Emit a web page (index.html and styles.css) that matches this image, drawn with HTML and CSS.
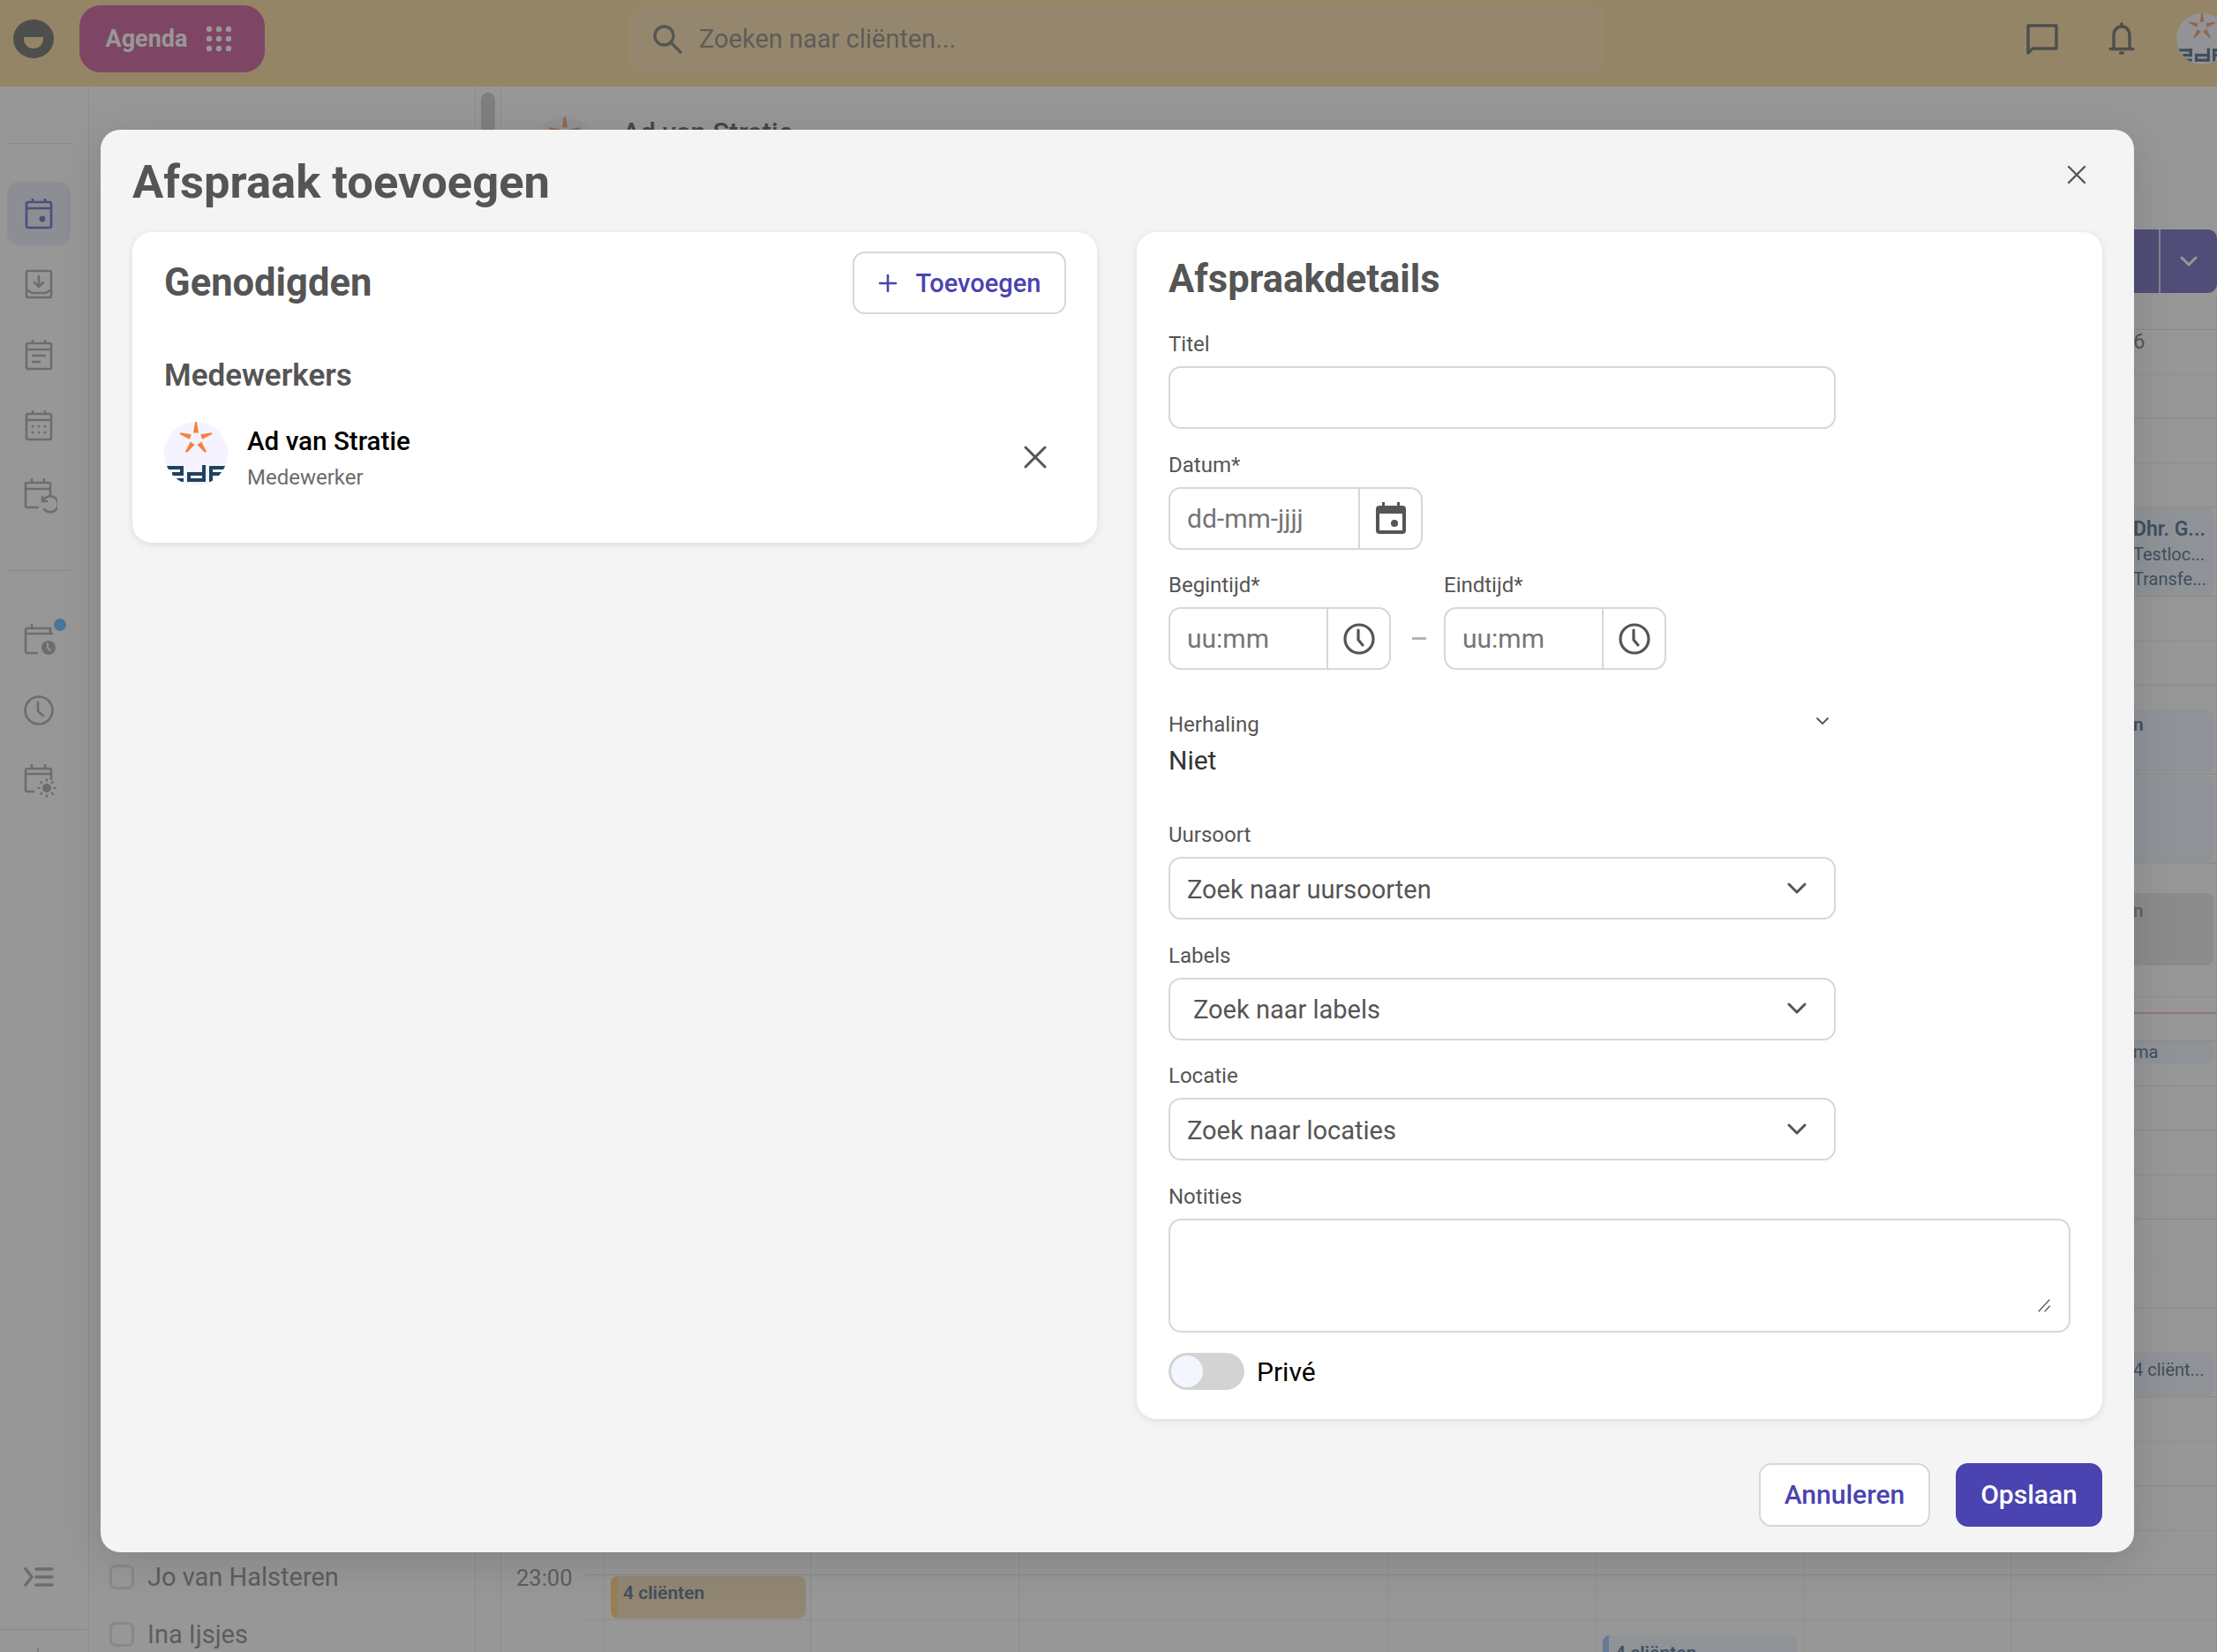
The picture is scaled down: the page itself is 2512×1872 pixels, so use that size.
FILE: index.html
```html
<!DOCTYPE html>
<html lang="nl">
  <head>
    <meta charset="utf-8">
    <title>Afspraak toevoegen</title>
    <link rel="stylesheet" href="styles.css">
  </head>
  <body>
    <svg class="defs" width="0" height="0">
      <symbol id="eda-logo" viewBox="0 0 72 72">
        <rect width="72" height="72" fill="#f4f3ff"/>
        <g fill="#f5813f">
          <polygon points="35,0 37,0 39,12.500 33,12.500"/>
          <polygon points="35,0 37,0 39,12.500 33,12.500" transform="rotate(72 36 19)"/>
          <polygon points="35,0 37,0 39,12.500 33,12.500" transform="rotate(144 36 19)"/>
          <polygon points="35,0 37,0 39,12.500 33,12.500" transform="rotate(216 36 19)"/>
          <polygon points="35,0 37,0 39,12.500 33,12.500" transform="rotate(288 36 19)"/>
        </g>
        <g fill="#1f4260">
          <rect x="3" y="50" width="19" height="4"/>
          <rect x="18" y="50" width="4" height="11"/>
          <rect x="9" y="57" width="13" height="4"/>
          <rect x="9" y="64" width="13" height="4"/>
          <rect x="26" y="57" width="21" height="4"/>
          <rect x="26" y="57" width="4" height="11"/>
          <rect x="26" y="64" width="21" height="4"/>
          <rect x="43" y="49" width="4" height="19"/>
          <rect x="51" y="50" width="19" height="4"/>
          <rect x="51" y="50" width="4" height="18"/>
          <rect x="51" y="57" width="15" height="4"/>
        </g>
      </symbol>
    </svg>

    <div class="app">
      <header class="topbar">
        <div class="brand"><span class="brand-smile"></span></div>
        <button class="agenda-btn">
          <span>Agenda</span>
          <svg width="30" height="30" viewBox="0 0 30 30" fill="currentColor">
            <circle cx="4" cy="4" r="3.200"/><circle cx="15" cy="4" r="3.200"/><circle cx="26" cy="4" r="3.200"/>
            <circle cx="4" cy="15" r="3.200"/><circle cx="15" cy="15" r="3.200"/><circle cx="26" cy="15" r="3.200"/>
            <circle cx="4" cy="26" r="3.200"/><circle cx="15" cy="26" r="3.200"/><circle cx="26" cy="26" r="3.200"/>
          </svg>
        </button>
        <div class="search">
          <svg width="34" height="34" viewBox="0 0 34 34" fill="none" stroke="currentColor" stroke-width="3.400" stroke-linecap="round">
            <circle cx="13.500" cy="13.500" r="10.500"/><path d="M21.500 21.500 32 32"/>
          </svg>
          <span>Zoeken naar cliënten...</span>
        </div>
        <svg class="chat-icon" width="36" height="36" viewBox="0 0 36 36" fill="none" stroke="currentColor" stroke-width="3.400" stroke-linejoin="round">
          <path d="M2 3h32v26H7l-5 5z"/>
        </svg>
        <svg class="bell-icon" width="30" height="38" viewBox="0 0 30 38" fill="none" stroke="currentColor" stroke-width="3.400" stroke-linecap="round" stroke-linejoin="round">
          <path d="M6 30V15c0-6 4-10 9-10s9 4 9 10v15"/><path d="M2 30.500h26"/><path d="M15 2v3"/><path d="M13.500 35h3"/>
        </svg>
        <svg class="top-avatar"><use href="#eda-logo"/></svg>
      </header>

      <div class="main">
        <nav class="sidebar">
          <div class="side-line first"></div>
          <a class="side-item active">
            <svg width="32" height="36" viewBox="0 0 32 36" fill="none" stroke="currentColor" stroke-width="2.600"><rect x="2" y="5" width="28" height="29" rx="2"/><path d="M2 12h28M9 1v4M23 1v4"/><circle cx="20" cy="24" r="3.400" fill="currentColor" stroke="none"/></svg>
          </a>
          <a class="side-item">
            <svg width="32" height="34" viewBox="0 0 32 34" fill="none" stroke="currentColor" stroke-width="2.600" stroke-linecap="round" stroke-linejoin="round"><rect x="2" y="2" width="28" height="30" rx="2"/><path d="M16 8v12M11 15l5 5 5-5M2 24c4 0 4 3 7 3h14c3 0 3-3 7-3"/></svg>
          </a>
          <a class="side-item">
            <svg width="32" height="36" viewBox="0 0 32 36" fill="none" stroke="currentColor" stroke-width="2.600"><rect x="2" y="5" width="28" height="29" rx="2"/><path d="M2 12h28M9 1v4M23 1v4M8 19h16M8 26h10"/></svg>
          </a>
          <a class="side-item">
            <svg width="32" height="36" viewBox="0 0 32 36" fill="none" stroke="currentColor" stroke-width="2.600"><rect x="2" y="5" width="28" height="29" rx="2"/><path d="M2 12h28M9 1v4M23 1v4"/><g fill="currentColor" stroke="none"><circle cx="9" cy="19" r="1.500"/><circle cx="16" cy="19" r="1.500"/><circle cx="23" cy="19" r="1.500"/><circle cx="9" cy="26" r="1.500"/><circle cx="16" cy="26" r="1.500"/><circle cx="23" cy="26" r="1.500"/></g></svg>
          </a>
          <a class="side-item">
            <svg class="shift" width="38" height="40" viewBox="0 0 38 40" fill="none" stroke="currentColor" stroke-width="2.600" stroke-linecap="round"><path d="M16 33H4a2 2 0 0 1-2-2V7a2 2 0 0 1 2-2h24a2 2 0 0 1 2 2v13M2 12h28M9 1v4M23 1v4"/><path d="M22 25a9 9 0 1 1 1 10M21 21v5h5"/></svg>
          </a>
          <div class="side-line second"></div>
          <a class="side-item">
            <span class="side-dot"></span>
            <svg class="shift" width="38" height="40" viewBox="0 0 38 40" fill="none" stroke="currentColor" stroke-width="2.600" stroke-linecap="round"><path d="M15 35H4a2 2 0 0 1-2-2V9a2 2 0 0 1 2-2h26v6M2 13h30M9 3v4"/><circle cx="28" cy="29" r="8" fill="currentColor" stroke="none"/><path d="M27 24v5l3 3" stroke="#fff" stroke-width="1.800"/></svg>
          </a>
          <a class="side-item">
            <svg width="36" height="36" viewBox="0 0 36 36" fill="none" stroke="currentColor" stroke-width="2.600" stroke-linecap="round" stroke-linejoin="round"><circle cx="18" cy="18" r="15.500"/><path d="M17 9v10l6 5"/></svg>
          </a>
          <a class="side-item">
            <svg class="shift" width="38" height="40" viewBox="0 0 38 40" fill="none" stroke="currentColor" stroke-width="2.600" stroke-linecap="round"><path d="M11 32H4a2 2 0 0 1-2-2V8a2 2 0 0 1 2-2h25a2 2 0 0 1 2 2v10M2 12h29M9 2v4M24 2v4"/><circle cx="26" cy="28" r="5" fill="currentColor" stroke="none"/><path d="M26 18v2M26 36v2M16 28h2M34 28h2M19 21l1.500 1.500M33 21l-1.500 1.500M19 35l1.500-1.500M33 35l-1.500-1.500" stroke-width="2"/></svg>
          </a>
          <a class="side-collapse">
            <svg width="34" height="24" viewBox="0 0 34 24" fill="none" stroke="currentColor" stroke-width="3.600" stroke-linecap="round" stroke-linejoin="round"><path d="M2 3l7 9-7 9M14 3h18M14 12h18M14 21h18"/></svg>
          </a>
          <div class="side-line last"></div>
          <div class="side-stub"></div>
        </nav>

        <aside class="people">
          <label class="person-row"><span class="check"></span>Jo van Halsteren</label>
          <label class="person-row"><span class="check"></span>Ina Ijsjes</label>
        </aside>
        <div class="scroller"><div class="thumb"></div></div>

        <section class="calendar">
          <div class="cal-head">
            <svg class="cal-avatar"><use href="#eda-logo"/></svg>
            <span class="cal-name">Ad van Stratie</span>
            <div class="split-btn">
              <span class="split-main"></span>
              <span class="split-arrow">
                <svg width="22" height="14" viewBox="0 0 22 14" fill="none" stroke="currentColor" stroke-width="3" stroke-linecap="round" stroke-linejoin="round"><path d="M3 3l8 8 8-8"/></svg>
              </span>
            </div>
          </div>
          <div class="cal-body">
            <div class="times"><span class="time">23:00</span></div>
            <div class="grid">
              <div class="col"></div>
              <div class="col"></div>
              <div class="col"></div>
              <div class="col"></div>
              <div class="col"></div>
              <div class="col"></div>
              <div class="col"></div>
              <div class="col"></div>
              <span class="day-num">6</span>
              <div class="event blue ev-dhr"><b>Dhr. G...</b><span>Testloc...</span><span>Transfe...</span></div>
              <div class="event blue ev-a"><b>n</b></div>
              <div class="event blue ev-b"></div>
              <div class="event grey ev-c"><b>n</b></div>
              <div class="now-line"></div>
              <div class="event blue ev-ma"><span>ma</span></div>
              <div class="event blue ev-four"><span>4 cliënt...</span></div>
              <div class="event tan ev-tan"><b>4 cliënten</b></div>
              <div class="event blue barred ev-blue"><b>4 cliënten</b></div>
            </div>
          </div>
        </section>
      </div>
    </div>

    <div class="overlay"></div>

    <div class="modal">
      <h1 class="modal-title">Afspraak toevoegen</h1>
      <button class="modal-close">
        <svg width="22" height="22" viewBox="0 0 22 22" fill="none" stroke="currentColor" stroke-width="2.400" stroke-linecap="round"><path d="M2 2l18 18M20 2 2 20"/></svg>
      </button>

      <div class="modal-cols">
        <div class="card guests">
          <div class="guests-head">
            <h2 class="card-title">Genodigden</h2>
            <button class="btn btn-outline btn-add">
              <svg width="22" height="22" viewBox="0 0 22 22" fill="none" stroke="currentColor" stroke-width="2.600" stroke-linecap="round"><path d="M11 2v18M2 11h18"/></svg>
              Toevoegen
            </button>
          </div>
          <h3 class="group-title">Medewerkers</h3>
          <div class="guest">
            <svg class="guest-avatar"><use href="#eda-logo"/></svg>
            <div class="guest-info">
              <div class="guest-name">Ad van Stratie</div>
              <div class="guest-role">Medewerker</div>
            </div>
            <svg class="guest-remove" width="26" height="26" viewBox="0 0 26 26" fill="none" stroke="currentColor" stroke-width="3" stroke-linecap="round"><path d="M2 2l22 22M24 2 2 24"/></svg>
          </div>
        </div>

        <div class="card details">
          <h2 class="card-title">Afspraakdetails</h2>

          <div class="field first">
            <label class="label">Titel</label>
            <input class="input wide" type="text">
          </div>

          <div class="field">
            <label class="label">Datum*</label>
            <div class="input-group date-group">
              <input class="bare" type="text" placeholder="dd-mm-jjjj">
              <span class="addon">
                <svg width="34" height="36" viewBox="0 0 34 36" fill="currentColor"><path d="M7 0h3v4h14V0h3v4h3a4 4 0 0 1 4 4v24a4 4 0 0 1-4 4H4a4 4 0 0 1-4-4V8a4 4 0 0 1 4-4h3z"/><rect x="4" y="13" width="26" height="19" fill="#fff"/><circle cx="21" cy="24" r="4"/></svg>
              </span>
            </div>
          </div>

          <div class="field time-row">
            <div>
              <label class="label">Begintijd*</label>
              <div class="input-group time-group">
                <input class="bare" type="text" placeholder="uu:mm">
                <span class="addon">
                  <svg width="36" height="36" viewBox="0 0 36 36" fill="none" stroke="currentColor" stroke-width="3.200" stroke-linecap="round" stroke-linejoin="round"><circle cx="18" cy="18" r="16"/><path d="M17 8v11l5 6"/></svg>
                </span>
              </div>
            </div>
            <span class="time-dash"></span>
            <div>
              <label class="label">Eindtijd*</label>
              <div class="input-group time-group">
                <input class="bare" type="text" placeholder="uu:mm">
                <span class="addon">
                  <svg width="36" height="36" viewBox="0 0 36 36" fill="none" stroke="currentColor" stroke-width="3.200" stroke-linecap="round" stroke-linejoin="round"><circle cx="18" cy="18" r="16"/><path d="M17 8v11l5 6"/></svg>
                </span>
              </div>
            </div>
          </div>

          <div class="repeat">
            <div class="repeat-head">
              <span class="repeat-label">Herhaling</span>
              <svg width="16" height="10" viewBox="0 0 16 10" fill="none" stroke="currentColor" stroke-width="1.800" stroke-linecap="round" stroke-linejoin="round"><path d="M2 2l6 6 6-6"/></svg>
            </div>
            <div class="repeat-value">Niet</div>
          </div>

          <div class="field after-repeat">
            <label class="label">Uursoort</label>
            <div class="select">
              <span>Zoek naar uursoorten</span>
              <svg width="22" height="14" viewBox="0 0 22 14" fill="none" stroke="currentColor" stroke-width="3" stroke-linecap="round" stroke-linejoin="round"><path d="M2 2l9 9 9-9"/></svg>
            </div>
          </div>

          <div class="field">
            <label class="label">Labels</label>
            <div class="select inset">
              <span>Zoek naar labels</span>
              <svg width="22" height="14" viewBox="0 0 22 14" fill="none" stroke="currentColor" stroke-width="3" stroke-linecap="round" stroke-linejoin="round"><path d="M2 2l9 9 9-9"/></svg>
            </div>
          </div>

          <div class="field wide-gap">
            <label class="label">Locatie</label>
            <div class="select">
              <span>Zoek naar locaties</span>
              <svg width="22" height="14" viewBox="0 0 22 14" fill="none" stroke="currentColor" stroke-width="3" stroke-linecap="round" stroke-linejoin="round"><path d="M2 2l9 9 9-9"/></svg>
            </div>
          </div>

          <div class="field">
            <label class="label">Notities</label>
            <div class="notes-wrap">
              <textarea class="notes"></textarea>
              <svg class="notes-grip" width="15" height="15" viewBox="0 0 15 15" fill="none" stroke="#555" stroke-width="1.200" stroke-linecap="round"><path d="M1 14 13 1M8 14l5.500-6"/></svg>
            </div>
          </div>

          <div class="private">
            <span class="toggle"><span class="knob"></span></span>
            <span class="private-label">Privé</span>
          </div>
        </div>
      </div>

      <div class="modal-foot">
        <button class="btn btn-outline btn-cancel">Annuleren</button>
        <button class="btn btn-primary">Opslaan</button>
      </div>
    </div>
  </body>
</html>
```
FILE: styles.css
```css
* {
  box-sizing: border-box;
}

html,
body {
  margin: 0;
  height: 1872px;
  overflow: hidden;
}

body {
  position: relative;
  font-family: Roboto, "Liberation Sans", sans-serif;
  color: #555;
  background: #fff;
}

button {
  font: inherit;
}

.defs {
  position: absolute;
}

/* Background app */
.app {
  display: flex;
  flex-direction: column;
  height: 1872px;
}

.topbar {
  display: flex;
  align-items: center;
  flex-shrink: 0;
  width: 2560px;
  height: 98px;
  padding: 0 0 10px 15px;
  background: #f8d080;
  color: #444;
}

.brand {
  position: relative;
  width: 46px;
  height: 44px;
  border-radius: 50%;
  background: #444;
  overflow: hidden;
}

.brand-smile {
  position: absolute;
  left: 12px;
  top: 20px;
  width: 22px;
  height: 13px;
  border-radius: 0 0 11px 11px;
  background: #f8d080;
}

.agenda-btn {
  display: flex;
  align-items: center;
  justify-content: center;
  gap: 21px;
  width: 210px;
  height: 76px;
  margin-left: 29px;
  padding: 0 7px 0 0;
  border: 0;
  border-radius: 24px;
  background: #c02c7b;
  color: #fff;
  font-size: 27px;
  font-weight: 700;
}

.search {
  display: flex;
  align-items: center;
  gap: 19px;
  width: 1105px;
  height: 76px;
  margin-left: 413px;
  padding-left: 26px;
  border-radius: 14px;
  background: rgba(255, 255, 255, 0.16);
  color: #555;
  font-size: 29px;
}

.search span {
  color: #6a6a60;
}

.chat-icon {
  flex-shrink: 0;
  margin-left: 478px;
}

.bell-icon {
  flex-shrink: 0;
  margin-left: 57px;
}

.top-avatar {
  flex-shrink: 0;
  width: 58px;
  height: 58px;
  margin-left: 47px;
  border-radius: 50%;
}

.main {
  display: flex;
  flex: 1;
  min-height: 0;
}

.sidebar {
  display: flex;
  flex-direction: column;
  flex-shrink: 0;
  width: 101px;
  padding: 64px 20px 0 8px;
  border-right: 1px solid #e2e2e2;
  color: #929292;
}

.side-line {
  flex-shrink: 0;
  height: 1px;
  background: #dcdcdc;
}

.side-line.first {
  margin-bottom: 43px;
}

.side-line.second {
  margin: 40px 0 42px;
}

.side-line.last {
  width: 100px;
  margin: 47px 0 0 -8px;
}

.side-item {
  position: relative;
  display: flex;
  align-items: center;
  justify-content: center;
  flex-shrink: 0;
  height: 72px;
  margin-bottom: 8px;
  border-radius: 14px;
}

.side-item.active {
  background: #e4e4f6;
  color: #4a43b0;
}

.side-item .shift {
  margin-left: 4px;
}

.side-dot {
  position: absolute;
  left: 53px;
  top: 12px;
  width: 14px;
  height: 14px;
  border-radius: 50%;
  background: #38a7ff;
}

.side-collapse {
  display: flex;
  justify-content: center;
  margin-top: auto;
  height: 24px;
}

.side-stub {
  width: 2px;
  height: 4px;
  margin: 21px 0 0 34px;
  background: #bdbdbd;
}

.people {
  display: flex;
  flex-direction: column;
  justify-content: flex-end;
  gap: 35px;
  flex-shrink: 0;
  width: 438px;
  padding: 0 0 5px 23px;
  border-right: 1px solid #e2e2e2;
}

.person-row {
  display: flex;
  align-items: center;
  gap: 15px;
  height: 30px;
  color: #6b6b6b;
  font-size: 29px;
}

.check {
  width: 28px;
  height: 28px;
  border: 3px solid #d8d8d8;
  border-radius: 7px;
}

.scroller {
  flex-shrink: 0;
  width: 29px;
  padding: 7px 0 0 6px;
  border-right: 1px solid #e2e2e2;
}

.thumb {
  width: 16px;
  height: 400px;
  border-radius: 8px;
  background: #c0c0c0;
}

.calendar {
  display: flex;
  flex-direction: column;
  flex: 1;
  min-width: 0;
}

.cal-head {
  position: relative;
  display: flex;
  align-items: flex-start;
  flex-shrink: 0;
  height: 238px;
  padding: 34px 0 0 36px;
}

.cal-avatar {
  width: 72px;
  height: 72px;
  border-radius: 50%;
}

.cal-name {
  margin-left: 29px;
  color: #333;
  font-size: 31px;
  font-weight: 500;
}

.split-btn {
  position: absolute;
  top: 162px;
  right: 0;
  display: flex;
  height: 72px;
  border-radius: 10px;
  background: #4a43b0;
  color: #fff;
  overflow: hidden;
}

.split-main {
  width: 200px;
  border-right: 2px solid #cfcfe6;
}

.split-arrow {
  display: flex;
  align-items: center;
  justify-content: center;
  width: 64px;
}

.cal-body {
  display: flex;
  flex: 1;
  min-height: 0;
}

.times {
  position: relative;
  flex-shrink: 0;
  width: 95px;
}

.time {
  position: absolute;
  left: 17px;
  top: 1435px;
  color: #6b6b6b;
  font-size: 25.5px;
  line-height: 34px;
}

.grid {
  position: relative;
  flex: 1;
  display: grid;
  grid-template-columns: 22px 234px 236px 418px 236px 235px 235px 1fr;
  background-image: linear-gradient(
    #d8d8d8 1px,
    transparent 1px,
    transparent 50.4px,
    #e8e8e8 50.4px,
    #e8e8e8 51.4px,
    transparent 51.4px
  );
  background-size: 100% 100.8px;
  background-position: 0 36.8px;
}

.col {
  border-right: 1px solid #e6e6e6;
}

.day-num {
  position: absolute;
  left: 1754px;
  top: 37px;
  color: #555;
  font-size: 24px;
}

.event {
  position: absolute;
  display: flex;
  flex-direction: column;
  border-radius: 8px;
  padding: 6px 0 0 7px;
  color: #24436c;
  font-size: 20px;
  line-height: 28px;
  overflow: hidden;
  white-space: nowrap;
}

.event b {
  font-size: 21px;
  font-weight: 600;
}

.event.blue {
  background: #e9f5ff;
}

.event.grey {
  background: #e1e1e1;
  color: #777;
}

.event.tan {
  background: #eed4a0;
  border-left: 7px solid #ffc24a;
  padding-left: 7px;
}

.event.barred {
  border-left: 7px solid #7fb6ff;
  padding-left: 7px;
}

.ev-dhr {
  left: 1747px;
  top: 240px;
  width: 98px;
  height: 99px;
  padding-top: 10px;
}

.ev-dhr b {
  font-size: 23px;
}

.ev-a {
  left: 1747px;
  top: 468px;
  width: 98px;
  height: 73px;
  padding-top: 3px;
}

.ev-b {
  left: 1747px;
  top: 543px;
  width: 98px;
  height: 98px;
}

.ev-c {
  left: 1747px;
  top: 676px;
  width: 98px;
  height: 82px;
}

.now-line {
  position: absolute;
  left: 0;
  right: 0;
  top: 811px;
  height: 2px;
  background: #f3b0a8;
}

.ev-ma {
  left: 1747px;
  top: 844px;
  width: 98px;
  height: 25px;
  padding-top: 0;
  line-height: 25px;
}

.ev-four {
  left: 1747px;
  top: 1197px;
  width: 98px;
  height: 49px;
  padding-top: 5px;
}

.ev-tan {
  left: 29px;
  top: 1450px;
  width: 221px;
  height: 48px;
  padding-top: 5px;
}

.ev-blue {
  left: 1153px;
  top: 1517px;
  width: 220px;
  height: 48px;
}

.overlay {
  position: absolute;
  inset: 0;
  background: rgba(85, 85, 85, 0.61);
}

/* Modal */
.modal {
  position: absolute;
  left: 114px;
  top: 147px;
  width: 2304px;
  padding: 29px 36px 29px 36px;
  border-radius: 22px;
  background: #f4f4f4;
  box-shadow: 0 10px 50px rgba(0, 0, 0, 0.13);
}

.modal-title {
  margin: 0 0 27px;
  font-size: 52.5px;
  font-weight: 700;
  line-height: 60px;
}

.modal-close {
  position: absolute;
  top: 40px;
  right: 54px;
  display: flex;
  padding: 0;
  border: 0;
  background: none;
  color: #555;
}

.modal-cols {
  display: flex;
  align-items: flex-start;
  gap: 45px;
}

.card {
  flex: 1;
  border-radius: 22px;
  background: #fff;
  box-shadow: 0 2px 8px rgba(0, 0, 0, 0.1);
}

.card-title {
  margin: 0;
  font-size: 43.5px;
  font-weight: 700;
  line-height: 50px;
}

.guests {
  padding: 22px 35px 57px 36px;
}

.guests-head {
  display: flex;
  align-items: center;
  justify-content: space-between;
}

.group-title {
  margin: 50px 0 32px;
  font-size: 35px;
  font-weight: 600;
  line-height: 40px;
}

.guest {
  display: flex;
  align-items: center;
  height: 80px;
}

.guest-avatar {
  align-self: flex-start;
  width: 72px;
  height: 72px;
  border-radius: 50%;
}

.guest-info {
  flex: 1;
  margin-left: 22px;
  padding-top: 1px;
}

.guest-name {
  color: #000;
  font-size: 29.6px;
  font-weight: 500;
  line-height: 38px;
}

.guest-role {
  margin-top: 7px;
  color: #6b6b6b;
  font-size: 24px;
  line-height: 30px;
}

.guest-remove {
  margin: 0 22px 0 0;
}

.btn {
  display: flex;
  align-items: center;
  justify-content: center;
  height: 72px;
  border-radius: 14px;
  font-size: 30px;
  font-weight: 500;
}

.btn-outline {
  border: 2px solid #d7d7d7;
  background: #fff;
  color: #4a43b0;
}

.btn-add {
  gap: 21px;
  width: 242px;
  height: 71px;
  padding-right: 6px;
  font-size: 29px;
}

.btn-cancel {
  width: 194px;
}

.btn-primary {
  width: 166px;
  border: 0;
  background: #4a43b0;
  color: #fff;
}

.details {
  padding: 29px 36px 33px;
}

.field {
  margin-top: 25.5px;
}

.field.first {
  margin-top: 33px;
}

.field.after-repeat {
  margin-top: 50px;
}

.label,
.repeat-label {
  display: block;
  height: 29px;
  margin-bottom: 11px;
  color: #555;
  font-size: 24px;
  line-height: 31px;
}

.input,
.select {
  display: flex;
  align-items: center;
  width: 756px;
  height: 71px;
  border: 2px solid #d7d7d7;
  border-radius: 14px;
  background: #fff;
}

.select {
  justify-content: space-between;
  padding: 0 31px 0 19px;
  color: #555;
  font-size: 29px;
}

.select span {
  padding-top: 2px;
}

.select.inset {
  padding-left: 26px;
}

.input-group {
  display: flex;
  height: 71px;
  border: 2px solid #d7d7d7;
  border-radius: 14px;
  background: #fff;
  overflow: hidden;
}

.date-group {
  width: 288px;
}

.time-group {
  width: 252px;
}

.bare {
  flex: 1;
  min-width: 0;
  padding: 0 0 0 19px;
  border: 0;
  outline: 0;
  background: none;
  font: inherit;
  font-size: 30px;
}

.bare::placeholder {
  color: #757575;
  opacity: 1;
}

.addon {
  display: flex;
  align-items: center;
  justify-content: center;
  flex-shrink: 0;
  width: 71px;
  border-left: 2px solid #d7d7d7;
  color: #555;
}

.time-row {
  display: flex;
  align-items: flex-end;
}

.time-dash {
  width: 16px;
  height: 3px;
  margin: 0 20px 34px 24px;
  background: #b5b5b5;
}

.repeat {
  width: 756px;
  margin-top: 47px;
}

.repeat-head {
  display: flex;
  justify-content: space-between;
  padding-right: 7px;
}

.repeat-head svg {
  margin-top: 6px;
}

.repeat-label {
  margin-bottom: 8px;
  line-height: 31px;
}

.repeat-value {
  color: #333;
  font-size: 30px;
  line-height: 38px;
}

.notes-wrap {
  position: relative;
}

.notes {
  display: block;
  width: 100%;
  height: 129px;
  border: 2px solid #d7d7d7;
  border-radius: 14px;
  outline: 0;
  background: #fff;
  resize: none;
}

.notes-grip {
  position: absolute;
  right: 22px;
  bottom: 23px;
}

.private {
  display: flex;
  align-items: center;
  gap: 14px;
  margin-top: 23px;
}

.toggle {
  display: flex;
  align-items: center;
  width: 86px;
  height: 42px;
  padding-left: 3px;
  border-radius: 21px;
  background: #d3d3d3;
}

.knob {
  width: 36px;
  height: 36px;
  border-radius: 50%;
  background: #f4f6ff;
}

.private-label {
  color: #000;
  font-size: 30px;
  padding-top: 1px;
}

.modal-foot {
  display: flex;
  justify-content: flex-end;
  gap: 29px;
  margin-top: 50px;
}
```
